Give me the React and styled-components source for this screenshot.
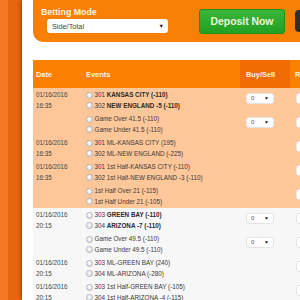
import React from 'react';
import styled, { createGlobalStyle } from 'styled-components';

const GlobalStyle = createGlobalStyle`
  html, body {
    margin: 0;
    padding: 0;
  }
  body {
    width: 300px;
    height: 300px;
    overflow: hidden;
    font-family: "Liberation Sans", Arial, sans-serif;
    background: #f2701d;
  }
`;

const games = [
  {
    id: 'a',
    tone: 'peach',
    date: '01/16/2016',
    time: '16:35',
    pairs: [
      {
        buy: true,
        lines: [
          { num: '301', text: 'KANSAS CITY (-110)', strong: true },
          { num: '302', text: 'NEW ENGLAND -5 (-110)', strong: true },
        ],
      },
      {
        buy: true,
        lines: [{ text: 'Game Over 41.5 (-110)' }, { text: 'Game Under 41.5 (-110)' }],
      },
    ],
  },
  {
    id: 'b',
    tone: 'peach',
    date: '01/16/2016',
    time: '16:35',
    pairs: [
      {
        lines: [
          { num: '301', text: 'ML-KANSAS CITY (195)' },
          { num: '302', text: 'ML-NEW ENGLAND (-225)' },
        ],
      },
    ],
  },
  {
    id: 'c',
    tone: 'peach',
    date: '01/16/2016',
    time: '16:35',
    pairs: [
      {
        lines: [
          { num: '301', text: '1st Half-KANSAS CITY (-110)' },
          { num: '302', text: '1st Half-NEW ENGLAND -3 (-110)' },
        ],
      },
      {
        lines: [{ text: '1st Half Over 21 (-115)' }, { text: '1st Half Under 21 (-105)' }],
      },
    ],
  },
  {
    id: 'd',
    tone: 'plain',
    date: '01/16/2016',
    time: '20:15',
    pairs: [
      {
        buy: true,
        lines: [
          { num: '303', text: 'GREEN BAY (-110)', strong: true },
          { num: '304', text: 'ARIZONA -7 (-110)', strong: true },
        ],
      },
      {
        buy: true,
        lines: [{ text: 'Game Over 49.5 (-110)' }, { text: 'Game Under 49.5 (-110)' }],
      },
    ],
  },
  {
    id: 'e',
    tone: 'plain',
    date: '01/16/2016',
    time: '20:15',
    pairs: [
      {
        lines: [
          { num: '303', text: 'ML-GREEN BAY (240)' },
          { num: '304', text: 'ML-ARIZONA (-280)' },
        ],
      },
    ],
  },
  {
    id: 'f',
    tone: 'plain',
    date: '01/16/2016',
    time: '20:15',
    pairs: [
      {
        lines: [
          { num: '303', text: '1st Half-GREEN BAY (-105)' },
          { num: '304', text: '1st Half-ARIZONA -4 (-115)' },
        ],
      },
    ],
  },
];

const Page = styled.div`
  display: flex;
  width: 300px;
  height: 300px;
  overflow: hidden;
`;

const SideStrip = styled.div`
  flex: none;
  width: 22px;
  background: linear-gradient(
    to right,
    #f47824 0,
    #f47824 8px,
    #e8650f 8px,
    #e8650f 20px,
    #f3721e 20px
  );
`;

const Panel = styled.div`
  flex: 1;
  min-width: 0;
  padding-left: 11px;
  background: #fff;
  box-shadow: -1px 0 3px rgba(0, 0, 0, 0.5);
  overflow: hidden;
  position: relative;
`;

const TopBar = styled.div`
  display: flex;
  align-items: flex-start;
  width: 360px;
  height: 42px;
  background: #f98006;
  border-bottom-left-radius: 10px;
`;

const ModeBlock = styled.div`
  display: flex;
  flex-direction: column;
  padding: 7px 0 0 8px;
`;

const ModeLabel = styled.div`
  font-size: 8.8px;
  line-height: 10px;
  font-weight: bold;
  color: #fff3e2;
`;

const ModeSelect = styled.div`
  display: flex;
  align-items: center;
  justify-content: space-between;
  box-sizing: border-box;
  width: 121px;
  height: 14px;
  margin: 2px 0 0 6px;
  padding: 0 4px 0 5px;
  background: #fff;
  border-radius: 3px;
  font-size: 7.3px;
  color: #444;
`;

const Arrow = styled.span`
  font-size: ${(p) => p.size || 5}px;
  color: #222;
`;

const DepositButton = styled.div`
  display: flex;
  align-items: center;
  justify-content: center;
  box-sizing: border-box;
  width: 86px;
  height: 25px;
  margin: 9px 0 0 31px;
  background: linear-gradient(#3ab63a, #22a022);
  border: 1px solid #1f901f;
  border-radius: 3px;
  color: #eaf7df;
  font-size: 10.4px;
  font-weight: bold;
`;

const DarkButton = styled.div`
  width: 60px;
  height: 22px;
  margin: 10px 0 0 10px;
  background: #2f2f2f;
  border-radius: 4px;
`;

const Table = styled.div`
  width: 360px;
  margin-top: 18px;
`;

const cols = '49px 158px 50px 1fr';

const HeadRow = styled.div`
  display: grid;
  grid-template-columns: ${cols};
  height: 28px;
  background: #fb8000;
`;

const HeadCell = styled.div`
  display: flex;
  align-items: center;
  padding-left: ${(p) => p.$pad}px;
  background: ${(p) => (p.$dark ? '#f06b04' : 'transparent')};
  color: #fff3e6;
  font-size: 7.4px;
  font-weight: bold;
`;

const GameRow = styled.div`
  display: grid;
  grid-template-columns: ${cols};
  padding: 2px 0 1px;
  background: ${(p) => (p.$tone === 'peach' ? '#fdc799' : '#f7f7f7')};
  color: #3a3a3a;
  font-size: 6.3px;
  line-height: 10.5px;
`;

const DateCell = styled.div`
  padding-left: 3px;
  color: #444;
`;

const Stack = styled.div`
  display: flex;
  flex-direction: column;
  gap: 3px;
  padding-left: ${(p) => p.$pad}px;
`;

const Pair = styled.div`
  height: 21px;
`;

const Line = styled.div`
  display: flex;
  align-items: center;
  gap: 1.5px;
  height: 10.5px;
  white-space: nowrap;
`;

const Radio = styled.span`
  flex: none;
  box-sizing: border-box;
  width: 7px;
  height: 7px;
  border-radius: 50%;
  border: 1px solid #b4b4b4;
  background: radial-gradient(circle at 40% 35%, #fff, #d6d6d6);
`;

const Strong = styled.b`
  font-weight: bold;
  color: #2a2a2a;
`;

const Slot = styled.div`
  height: 21px;
  padding-top: 3px;
  box-sizing: border-box;
`;

const MiniSelect = styled.div`
  display: flex;
  align-items: center;
  justify-content: space-between;
  box-sizing: border-box;
  width: 28px;
  height: 11px;
  padding: 0 4px;
  background: #fff;
  border: 1px solid #e4e4e4;
  border-radius: 3px;
  font-size: 6px;
  color: #555;
`;

const Select0 = () => (
  <MiniSelect>
    <span>0</span>
    <Arrow>▼</Arrow>
  </MiniSelect>
);

const EventLine = ({ num, text, strong }) => (
  <Line>
    <Radio />
    <span>
      {num && `${num} `}
      {strong ? <Strong>{text}</Strong> : text}
    </span>
  </Line>
);

export default function App() {
  return (
    <>
      <GlobalStyle />
      <Page>
        <SideStrip />
        <Panel>
          <TopBar>
            <ModeBlock>
              <ModeLabel>Betting Mode</ModeLabel>
              <ModeSelect>
                <span>Side/Total</span>
                <Arrow size={5.5}>▼</Arrow>
              </ModeSelect>
            </ModeBlock>
            <DepositButton>Deposit Now</DepositButton>
            <DarkButton />
          </TopBar>

          <Table>
            <HeadRow>
              <HeadCell $pad={3}>Date</HeadCell>
              <HeadCell $pad={4}>Events</HeadCell>
              <HeadCell $pad={6} $dark>
                Buy/Sell
              </HeadCell>
              <HeadCell $pad={5}>Risk</HeadCell>
            </HeadRow>

            {games.map((g) => (
              <GameRow key={g.id} $tone={g.tone}>
                <DateCell>
                  <div>{g.date}</div>
                  <div>{g.time}</div>
                </DateCell>
                <Stack $pad={4}>
                  {g.pairs.map((p, i) => (
                    <Pair key={i}>
                      {p.lines.map((l, j) => (
                        <EventLine key={j} {...l} />
                      ))}
                    </Pair>
                  ))}
                </Stack>
                <Stack $pad={6}>
                  {g.pairs.map((p, i) => (
                    <Slot key={i}>{p.buy && <Select0 />}</Slot>
                  ))}
                </Stack>
                <Stack $pad={6}>
                  {g.pairs.map((p, i) => (
                    <Slot key={i}>
                      <Select0 />
                    </Slot>
                  ))}
                </Stack>
              </GameRow>
            ))}
          </Table>
        </Panel>
      </Page>
    </>
  );
}
